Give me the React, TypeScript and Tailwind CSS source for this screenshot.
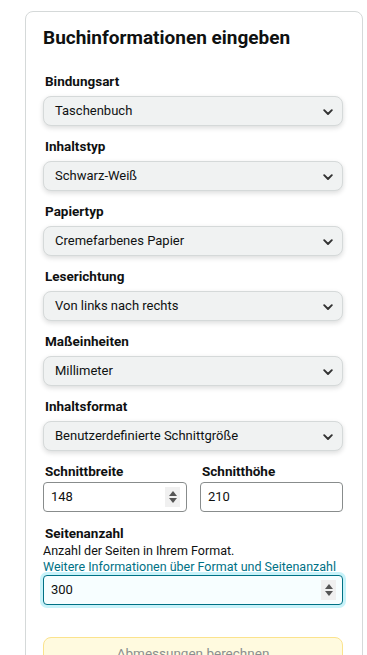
import React from "react";

const font = { fontFamily: '"Roboto", "Liberation Sans", Arial, sans-serif' };

function Chevron() {
  return (
    <svg width="10" height="7" viewBox="0 0 10 7" className="absolute right-[9px] top-[12px]">
      <path d="M1.2 1.2 L5 5 L8.8 1.2" fill="none" stroke="#333" strokeWidth="1.9" strokeLinecap="round" strokeLinejoin="round" />
    </svg>
  );
}

function Label({ children, className = "" }: { children: React.ReactNode; className?: string }) {
  return <div className={`pl-[2px] text-[13.5px] leading-[18px] font-bold text-[#0f1111] ${className}`}>{children}</div>;
}

function Select({ label, value }: { label: string; value: string }) {
  return (
    <div className="mt-[11px]">
      <Label>{label}</Label>
      <div className="relative mt-[6px] h-[30px] w-[300px] rounded-[8px] border border-[#d5d9d9] bg-[#f0f2f2] shadow-[0_2px_5px_rgba(15,17,17,0.15)] flex items-center pl-[11px] text-[13px] text-[#0f1111]">
        {value}
        <Chevron />
      </div>
    </div>
  );
}

function Spinner() {
  return (
    <div className="w-[15px] h-[20px] bg-[#f0f0f0] flex flex-col items-center justify-center gap-[2px]">
      <svg width="8" height="5" viewBox="0 0 8 5"><path d="M0 5 L4 0 L8 5 Z" fill="#555" /></svg>
      <svg width="8" height="5" viewBox="0 0 8 5"><path d="M0 0 L4 5 L8 0 Z" fill="#555" /></svg>
    </div>
  );
}

export default function App() {
  return (
    <div className="bg-white w-[367px] h-[655px] overflow-hidden" style={font}>
      <div className="ml-[25px] mt-[11px] w-[338px] h-[700px] rounded-[8px] border border-[#d5d9d9] pl-[17px] pt-[14px]">
        <h1 className="text-[19px] leading-[24px] font-bold text-[#0f1111]">Buchinformationen eingeben</h1>
        <div className="pt-[11px]">
          <Select label="Bindungsart" value="Taschenbuch" />
          <Select label="Inhaltstyp" value="Schwarz-Weiß" />
          <Select label="Papiertyp" value="Cremefarbenes Papier" />
          <Select label="Leserichtung" value="Von links nach rechts" />
          <Select label="Maßeinheiten" value="Millimeter" />
          <Select label="Inhaltsformat" value="Benutzerdefinierte Schnittgröße" />
        </div>
        <div className="mt-[11px] grid grid-cols-[144px_143px] gap-x-[13px] w-[300px]">
          <div>
            <Label>Schnittbreite</Label>
            <div className="mt-[2px] h-[30px] rounded-[4px] border border-[#888c8c] flex items-center justify-between pl-[7px] pr-[6px] text-[13px] text-[#0f1111]">
              <span>148</span>
              <Spinner />
            </div>
          </div>
          <div>
            <Label>Schnitthöhe</Label>
            <div className="mt-[2px] h-[30px] rounded-[4px] border border-[#888c8c] flex items-center pl-[7px] text-[13px] text-[#0f1111]">
              210
            </div>
          </div>
        </div>
        <Label className="mt-[12px]">Seitenanzahl</Label>
        <div className="text-[12.5px] leading-[16px] text-[#0f1111] mt-[1px]">Anzahl der Seiten in Ihrem Format.</div>
        <div className="text-[12.5px] leading-[16px] text-[#007185]">Weitere Informationen über Format und Seitenanzahl</div>
        <div className="h-[30px] w-[300px] rounded-[4px] border border-[#007185] bg-[#f7feff] shadow-[0_0_0_3px_#c8f3fa] flex items-center justify-between pl-[7px] pr-[6px] text-[13px] text-[#0f1111]">
          <span>300</span>
          <Spinner />
        </div>
        <div className="mt-[32px] h-[32px] w-[300px] rounded-[8px] border border-[#fbe38d] bg-[#fffadf] flex items-center justify-center pt-[1px] text-[13.5px] text-[#8b8f8f]">
          Abmessungen berechnen
        </div>
      </div>
    </div>
  );
}
